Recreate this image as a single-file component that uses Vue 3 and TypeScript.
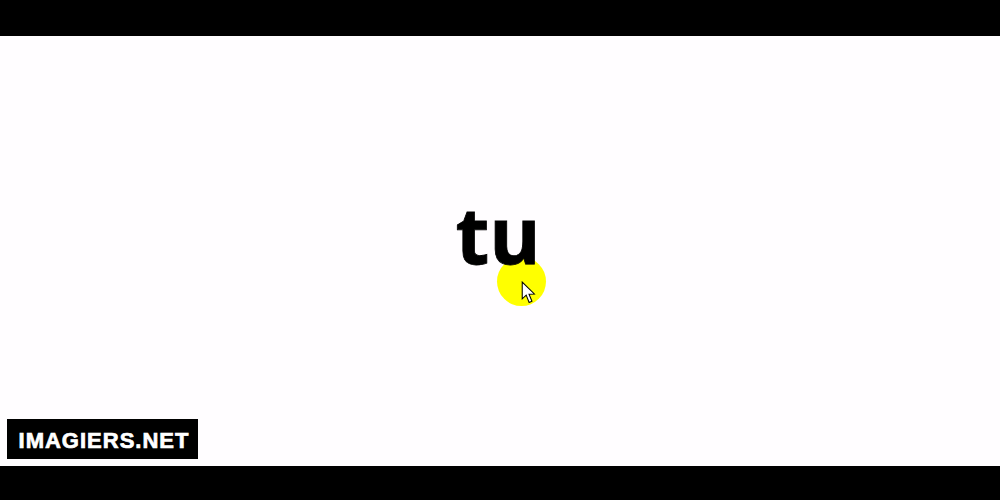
<script setup lang="ts">
const word: string = 'tu'
</script>

<template>
  <div class="page">
    <div class="bar top"></div>
    <main class="stage">
      <div class="center">
        <span class="word">{{ word }}</span>
        <span class="spot"></span>
        <svg class="cursor" width="15" height="23" viewBox="0 0 14 22">
          <path d="M1 1 L1 17 L4.8 13.5 L7.6 20.5 L10.3 19.3 L7.5 12.6 L12.6 12.4 Z" fill="#fff" stroke="#000" stroke-width="1"/>
        </svg>
      </div>
      <div class="badge">IMAGIERS.NET</div>
    </main>
    <div class="bar bottom"></div>
  </div>
</template>

<style>
html, body { margin: 0; background: #fff; }
</style>

<style scoped>
.page {
  width: 1000px;
  height: 500px;
  display: flex;
  flex-direction: column;
  overflow: hidden;
}
.bar { background: #000; }
.top { height: 36px; }
.bottom { height: 34px; }
.stage {
  flex: 1;
  background: #fffdff;
  display: flex;
  flex-direction: column;
  justify-content: space-between;
  padding: 0 0 7px 7px;
}
.center {
  position: relative;
  align-self: center;
  margin: 162px 11px 0 0;
  line-height: 72px;
  height: 72px;
}
.word {
  position: relative;
  z-index: 1;
  font-family: "Open Sans", sans-serif;
  font-weight: 700;
  font-size: 78px;
  -webkit-text-stroke: 0.8px #000;
  color: #000;
}
.spot {
  position: absolute;
  left: 41.5px;
  top: 59px;
  width: 49px;
  height: 49px;
  border-radius: 50%;
  background: #ffff00;
}
.cursor {
  position: absolute;
  z-index: 2;
  left: 66px;
  top: 83px;
}
.badge {
  align-self: flex-start;
  width: 191px;
  height: 40px;
  box-sizing: border-box;
  padding-left: 3px;
  background: #000;
  color: #fff;
  font-family: "Liberation Sans", Arial, sans-serif;
  font-weight: 700;
  font-size: 22px;
  letter-spacing: 1px;
  -webkit-text-stroke: 0.7px #fff;
  line-height: 43px;
  text-align: center;
  white-space: nowrap;
}
</style>
